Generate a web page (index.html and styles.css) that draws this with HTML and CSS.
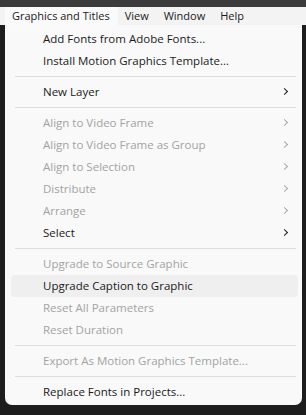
FILE: index.html
```html
<!DOCTYPE html>
<html lang="en">
  <head>
    <meta charset="UTF-8" />
    <title>Graphics and Titles</title>
    <link rel="stylesheet" href="styles.css">
  </head>
  <body>
    <div class="top-strip"></div>
    <div class="menubar">
      <span class="menubar-item active">Graphics and Titles</span>
      <span class="menubar-item">View</span>
      <span class="menubar-item">Window</span>
      <span class="menubar-item">Help</span>
    </div>
    <div class="backdrop">
      <div class="dropdown">
        <div class="item">Add Fonts from Adobe Fonts...</div>
        <div class="item">Install Motion Graphics Template...</div>
        <div class="separator"></div>
        <div class="item">New Layer <span class="chevron"></span></div>
        <div class="separator"></div>
        <div class="item disabled">Align to Video Frame <span class="chevron"></span></div>
        <div class="item disabled">Align to Video Frame as Group <span class="chevron"></span></div>
        <div class="item disabled">Align to Selection <span class="chevron"></span></div>
        <div class="item disabled">Distribute <span class="chevron"></span></div>
        <div class="item disabled">Arrange <span class="chevron"></span></div>
        <div class="item">Select <span class="chevron"></span></div>
        <div class="separator"></div>
        <div class="item disabled">Upgrade to Source Graphic</div>
        <div class="item hover">Upgrade Caption to Graphic</div>
        <div class="item disabled">Reset All Parameters</div>
        <div class="item disabled">Reset Duration</div>
        <div class="separator"></div>
        <div class="item disabled">Export As Motion Graphics Template...</div>
        <div class="separator"></div>
        <div class="item">Replace Fonts in Projects...</div>
      </div>
    </div>
  </body>
</html>
```

FILE: styles.css
```css
body {
  margin: 0;
  padding: 0;
  width: 306px;
  height: 415px;
  overflow: hidden;
  background-color: #1d1d1d;
  font-family: "Open Sans", "Noto Sans", sans-serif;
  font-size: 11.5px;
  color: #1a1a1a;
}
.top-strip {
  height: 7px;
  background-color: #3b3b3b;
}
.menubar {
  height: 18px;
  display: flex;
  align-items: center;
  background-color: #f3f3f3;
  padding-left: 5px;
  font-size: 11px;
}
.menubar-item {
  padding: 0 8px 0 7px;
  line-height: 18px;
}
.menubar-item.active {
  background-color: #fafafa;
}
.backdrop {
  padding: 0 4px 0 5px;
}
.dropdown {
  background-color: #f9f9f9;
  padding: 3px 0 2px;
  border-radius: 0 0 7px 7px;
}
.item {
  height: 22px;
  line-height: 22px;
  padding-left: 32px;
  margin: 0 4px 0 6px;
  border-radius: 4px;
  position: relative;
}
.item.disabled {
  color: #a3a3a3;
}
.item.hover {
  background-color: #efefef;
}
.chevron {
  position: absolute;
  right: 11px;
  top: 8px;
  width: 4px;
  height: 4px;
  border-right: 1.3px solid #1a1a1a;
  border-top: 1.3px solid #1a1a1a;
  transform: rotate(45deg);
}
.item.disabled .chevron {
  border-color: #a8a8a8;
}
.separator {
  height: 9px;
  display: flex;
  align-items: center;
  padding: 0 6px 0 10px;
}
.separator::after {
  content: "";
  flex: 1;
  height: 1px;
  background-color: #dedede;
}
```
